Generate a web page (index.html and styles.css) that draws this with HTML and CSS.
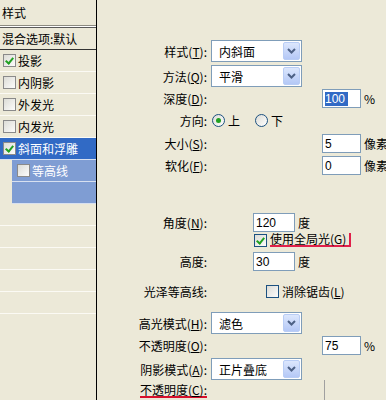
FILE: index.html
```html
<html lang="zh">
  <head>
    <link rel="stylesheet" href="styles.css">
  </head>
  <body>
    <div class="dialog">
      <div class="styles-list">
        <div class="list-head">样式</div>
        <div class="list-item blend">混合选项:默认</div>
        <div class="list-item"><span class="box checked"></span>投影</div>
        <div class="list-item"><span class="box"></span>内阴影</div>
        <div class="list-item"><span class="box"></span>外发光</div>
        <div class="list-item"><span class="box"></span>内发光</div>
        <div class="list-item selected"><span class="box checked"></span>斜面和浮雕</div>
        <div class="list-item sub"><span class="box"></span>等高线</div>
        <div class="list-item sub"></div>
        <div class="list-item"></div>
        <div class="list-item"></div>
        <div class="list-item"></div>
        <div class="list-item"></div>
        <div class="list-item"></div>
      </div>
      <div class="options">
        <div class="row r-style">
          <span class="lbl">样式(<u>T</u>):</span>
          <div class="select">内斜面<span class="drop"><svg width="9" height="6" viewBox="0 0 9 6"><polyline points="1,1 4.5,4.5 8,1" fill="none" stroke="#4d6185" stroke-width="2"/></svg></span></div>
        </div>
        <div class="row r-method">
          <span class="lbl">方法(<u>Q</u>):</span>
          <div class="select">平滑<span class="drop"><svg width="9" height="6" viewBox="0 0 9 6"><polyline points="1,1 4.5,4.5 8,1" fill="none" stroke="#4d6185" stroke-width="2"/></svg></span></div>
        </div>
        <div class="row r-depth">
          <span class="lbl">深度(<u>D</u>):</span>
          <div class="field far"><span class="hl">100</span></div>
          <span class="unit">%</span>
        </div>
        <div class="row r-dir">
          <span class="lbl">方向:</span>
          <span class="radio on"></span><span class="opt">上</span>
          <span class="radio second"></span><span class="opt">下</span>
        </div>
        <div class="row r-size">
          <span class="lbl">大小(<u>S</u>):</span>
          <div class="field far">5</div>
          <span class="unit px">像素</span>
        </div>
        <div class="row r-soft">
          <span class="lbl">软化(<u>F</u>):</span>
          <div class="field far">0</div>
          <span class="unit px">像素</span>
        </div>
        <div class="row r-angle">
          <span class="lbl">角度(<u>N</u>):</span>
          <div class="field near">120</div>
          <span class="unit">度</span>
        </div>
        <div class="row r-global">
          <span class="lbl"></span>
          <span class="check on near-check"></span><span class="focus">使用全局光(G)</span>
        </div>
        <div class="row r-alt">
          <span class="lbl">高度:</span>
          <div class="field near">30</div>
          <span class="unit">度</span>
        </div>
        <div class="row r-gloss">
          <span class="lbl">光泽等高线:</span>
          <span class="check mid-check"></span><span class="opt">消除锯齿(<u>L</u>)</span>
        </div>
        <div class="row r-hmode">
          <span class="lbl">高光模式(<u>H</u>):</span>
          <div class="select">滤色<span class="drop"><svg width="9" height="6" viewBox="0 0 9 6"><polyline points="1,1 4.5,4.5 8,1" fill="none" stroke="#4d6185" stroke-width="2"/></svg></span></div>
        </div>
        <div class="row r-hop">
          <span class="lbl">不透明度(<u>O</u>):</span>
          <div class="field far">75</div>
          <span class="unit">%</span>
        </div>
        <div class="row r-smode">
          <span class="lbl">阴影模式(<u>A</u>):</span>
          <div class="select">正片叠底<span class="drop"><svg width="9" height="6" viewBox="0 0 9 6"><polyline points="1,1 4.5,4.5 8,1" fill="none" stroke="#4d6185" stroke-width="2"/></svg></span></div>
        </div>
        <div class="row r-sop">
          <span class="lbl"><span class="red-line">不透明度(<u>C</u>):</span></span>
          <span class="slider-edge"></span>
        </div>
      </div>
    </div>
  </body>
</html>
```

FILE: styles.css
```css
body, html {
  margin: 0;
  width: 100%;
  height: 100%;
  overflow: hidden;
  background: #ece9d8;
  color: #000;
  font-family: "Noto Sans CJK SC", "Liberation Sans", sans-serif;
  font-size: 12px;
}
.dialog {
  display: flex;
  height: 400px;
}
.styles-list {
  width: 96px;
  flex: none;
  border-right: 1px solid #000;
}
.list-head {
  height: 25px;
  line-height: 25px;
  padding-left: 2px;
  border-bottom: 1px solid #8c8a80;
  box-shadow: 0 1px 0 #fff;
  margin-bottom: 1px;
}
.list-item {
  height: 21px;
  display: flex;
  align-items: center;
  padding-left: 3px;
  white-space: nowrap;
  border-bottom: 1px solid #fbfaf4;
}
.list-item.blend {
  padding-left: 2px;
  border-top: 1px solid #5a5a5a;
  border-bottom-color: #333;
}
.list-item.selected {
  background: #316ac5;
  color: #fff;
  border-bottom-color: #d7e0f0;
}
.list-item.sub {
  margin-left: 12px;
  padding-left: 5px;
  background: #7f9dd3;
  color: #fff;
  border-bottom-color: #d7e0f0;
}
.box, .check {
  width: 11px;
  height: 11px;
  flex: none;
  border: 1px solid #8a8a8a;
  background: linear-gradient(135deg, #dcdcd6, #fcfcfb);
  margin-right: 2px;
  position: relative;
}
.check {
  border-color: #1c5180;
}
.box.checked::after, .check.on::after {
  content: "";
  position: absolute;
  left: 3px;
  top: 1px;
  width: 3px;
  height: 6px;
  border: solid #21a121;
  border-width: 0 2px 2px 0;
  transform: rotate(40deg);
}
.options {
  flex: 1;
  padding-top: 40px;
  white-space: nowrap;
}
.row {
  display: flex;
  align-items: center;
}
.lbl {
  width: 110px;
  flex: none;
  margin-right: 4px;
  text-align: right;
}
.select {
  width: 82px;
  height: 20px;
  padding-left: 7px;
  border: 1px solid #7f9db9;
  background: #fff;
  display: flex;
  align-items: center;
  position: relative;
}
.drop {
  position: absolute;
  right: 1px;
  top: 1px;
  width: 15px;
  height: 16px;
  border: 1px solid #b9cdf5;
  border-radius: 2px;
  background: linear-gradient(#dce7fd, #b4c8f6);
  display: flex;
  align-items: center;
  justify-content: center;
}
.field {
  width: 35px;
  height: 17px;
  padding-left: 2px;
  border: 1px solid #7f9db9;
  background: #fff;
  display: flex;
  align-items: center;
  font-family: "Liberation Sans", sans-serif;
}
.field.far {
  margin-left: 111px;
}
.field.near {
  margin-left: 42px;
  width: 38px;
}
.hl {
  background: #316ac5;
  color: #fff;
  padding-right: 3px;
}
.unit {
  margin-left: 3px;
}
.unit.px {
  border-right: 2px solid #d8102c;
  height: 17px;
  line-height: 17px;
}
.radio {
  width: 11px;
  height: 11px;
  flex: none;
  margin-left: 1px;
  margin-right: 3px;
  border: 1px solid #1c5180;
  border-radius: 50%;
  background: linear-gradient(135deg, #dcdcd6, #fff);
  position: relative;
}
.radio.on::after {
  content: "";
  position: absolute;
  left: 3px;
  top: 3px;
  width: 5px;
  height: 5px;
  border-radius: 50%;
  background: #21a121;
}
.radio.second {
  margin-left: 15px;
}
.near-check {
  margin-left: 43px;
}
.mid-check {
  margin-left: 55px;
  margin-right: 3px;
}
.focus {
  margin-left: 1px;
  padding-right: 3px;
  line-height: 12px;
  border-bottom: 2px solid #e0204a;
  border-right: 2px solid #e0204a;
}
.red-line {
  display: inline-block;
  line-height: 12px;
  border-bottom: 2px solid #d8102c;
}
.slider-edge {
  margin-left: 113px;
  width: 1px;
  height: 20px;
  background: #a0a0a0;
  align-self: flex-end;
}
.r-style { height: 22px; }
.r-method { height: 22px; margin-top: 3px; }
.r-depth { height: 19px; margin-top: 2px; }
.r-dir { height: 18px; margin-top: 3px; }
.r-size { height: 19px; margin-top: 5px; }
.r-soft { height: 19px; margin-top: 3px; }
.r-angle { height: 19px; margin-top: 38px; }
.r-global { height: 14px; margin-top: 1px; }
.r-alt { height: 19px; margin-top: 5px; }
.r-gloss { height: 18px; margin-top: 11px; }
.r-hmode { height: 22px; margin-top: 12px; }
.r-hop { height: 19px; margin-top: 2px; }
.r-smode { height: 22px; margin-top: 3px; }
.r-sop { height: 18px; margin-top: 2px; }
```
